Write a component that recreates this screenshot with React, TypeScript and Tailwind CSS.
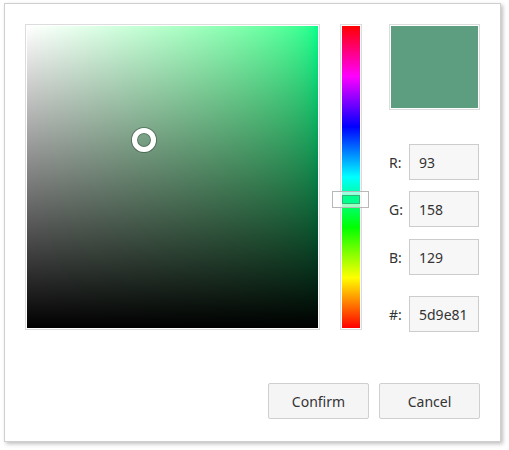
export default function App() {
  const font = { fontFamily: '"Segoe UI", "Noto Sans", "Open Sans", sans-serif' };
  const rows = [
    { label: "R:", value: "93", mt: "mt-[34px]" },
    { label: "G:", value: "158", mt: "mt-[11px]" },
    { label: "B:", value: "129", mt: "mt-[12px]" },
    { label: "#:", value: "5d9e81", mt: "mt-[21px]" },
  ];

  return (
    <div className="w-[509px] h-[450px] bg-white pt-[3px] pl-[4px]" style={font}>
      {/* Dialog */}
      <div className="w-[497px] h-[439px] bg-white border border-[#cfcfcf] shadow-[2px_2px_4px_rgba(0,0,0,0.25)] px-[20px] pt-[20px] flex flex-col">
        <div className="flex items-start">
          {/* Saturation / value canvas */}
          <div className="w-[295px] h-[306px] border border-[#dcdcdc] p-[1px] bg-white">
            <div className="relative w-full h-full bg-gradient-to-r from-white to-[#00ff8c]">
              <div className="absolute inset-0 bg-gradient-to-t from-black to-transparent" />
              <div className="absolute left-[105px] top-[102px] w-[24px] h-[24px] rounded-full border-[5px] border-white shadow-[0_0_0_1px_rgba(0,0,0,0.3),inset_0_0_0_1px_rgba(0,0,0,0.25)]" />
            </div>
          </div>

          {/* Hue bar */}
          <div className="relative ml-[20px] w-[22px] h-[306px] border border-[#dcdcdc] p-[1px] bg-white">
            <div className="w-full h-full bg-[linear-gradient(to_bottom,#ff0000,#ff00ff,#0000ff,#00ffff,#00ff00,#ffff00,#ff0000)]" />
            <div className="absolute left-[-9px] top-[166px] w-[37px] h-[17px] border border-[#b8b8b8] bg-white/60 flex items-center justify-center">
              <div className="w-[18px] h-[9px] bg-[#00ff8c] border border-[#2fb874]" />
            </div>
          </div>

          {/* Right column */}
          <div className="ml-[27px] w-[91px] flex flex-col">
            <div className="w-[91px] h-[86px] border border-[#dcdcdc] p-[1px] bg-white">
              <div className="w-full h-full bg-[#5d9e81]" />
            </div>
            {rows.map((r) => (
              <div key={r.label} className={`flex items-center ${r.mt}`}>
                <span className="w-[20px] text-[14px] text-[#333]">{r.label}</span>
                <div className="w-[70px] h-[36px] border border-[#cccccc] bg-[#f7f7f7] flex items-center pl-[9px] text-[14px] text-[#333]">
                  {r.value}
                </div>
              </div>
            ))}
          </div>
        </div>

        {/* Buttons */}
        <div className="mt-[51px] flex justify-end gap-[10px]">
          <button className="w-[101px] h-[36px] border border-[#cfcfcf] rounded-[2px] bg-[#f5f5f5] text-[14px] text-[#333]">
            Confirm
          </button>
          <button className="w-[101px] h-[36px] border border-[#cfcfcf] rounded-[2px] bg-[#f5f5f5] text-[14px] text-[#333]">
            Cancel
          </button>
        </div>
      </div>
    </div>
  );
}
